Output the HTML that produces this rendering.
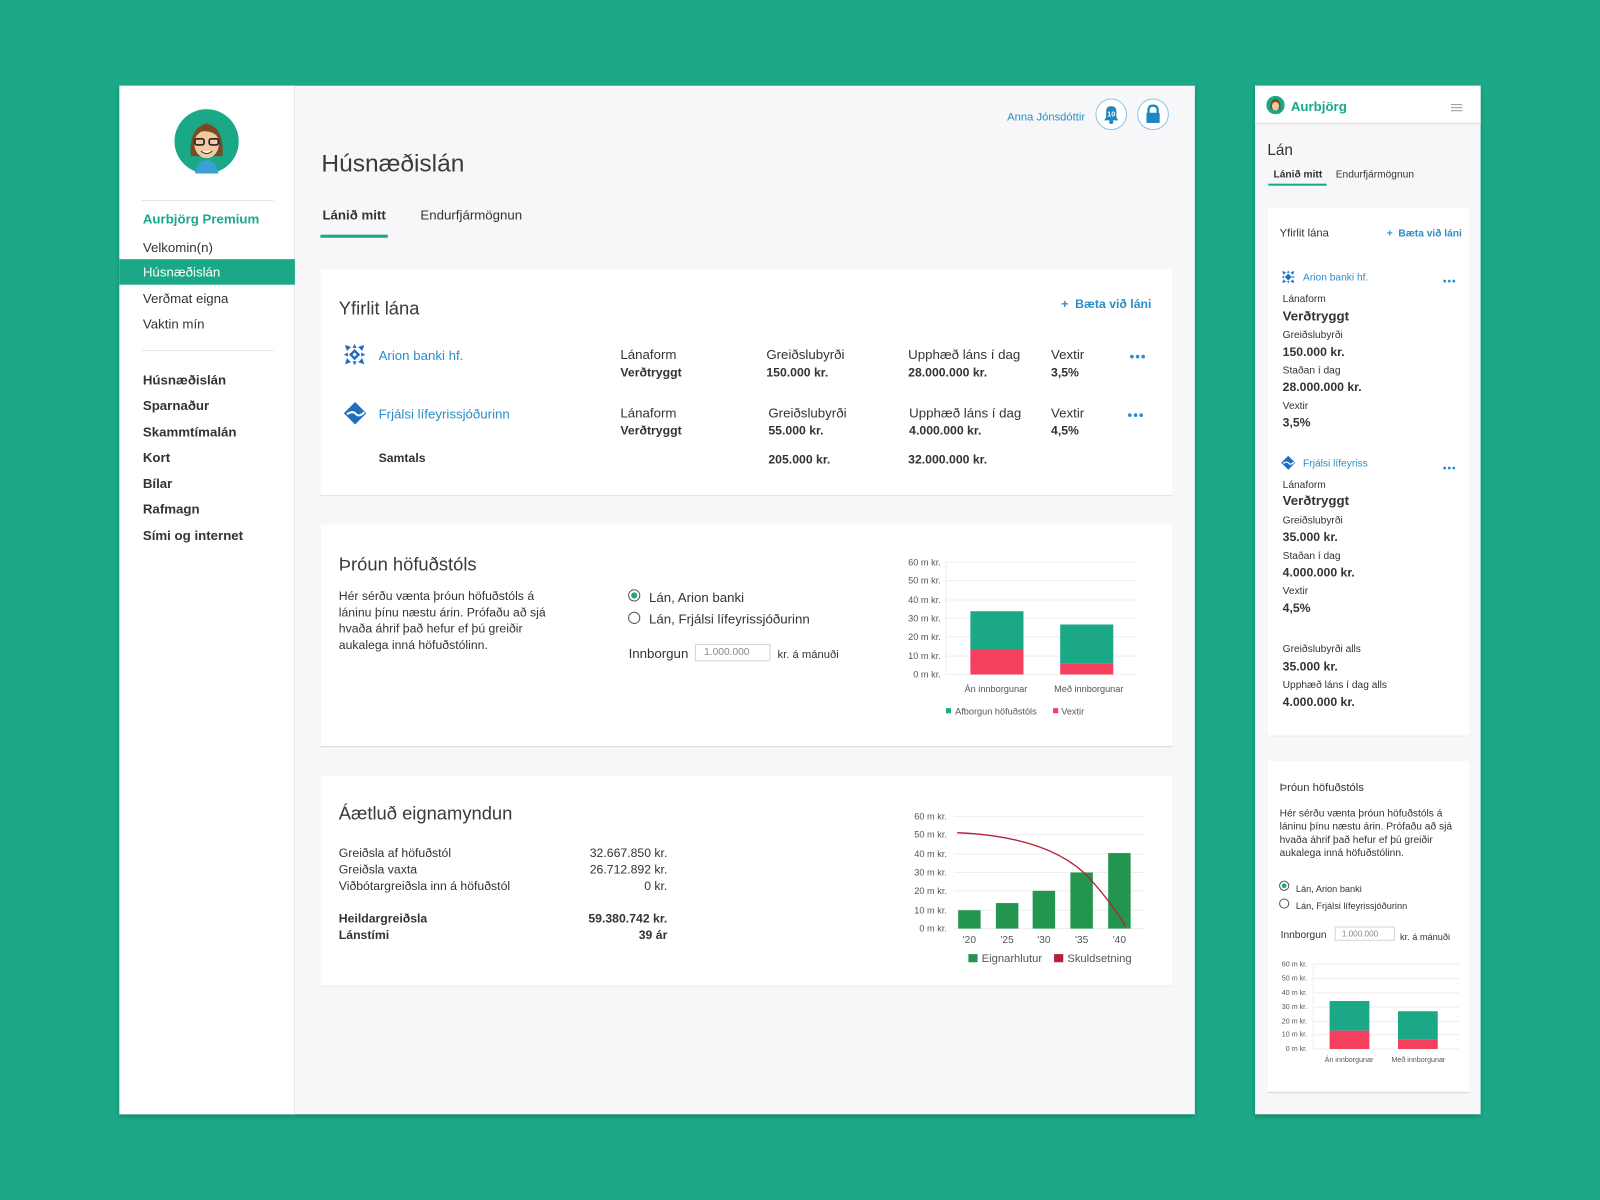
<!DOCTYPE html>
<html><head><meta charset="utf-8">
<style>
*{margin:0;padding:0;box-sizing:border-box}
html,body{width:1600px;height:1200px;overflow:hidden;background:#1aa886}
#w{position:absolute;left:0;top:0;width:1568px;height:1176px;transform:scale(1.020408);transform-origin:0 0;font-family:"Liberation Sans",sans-serif;color:#333}
.a{position:absolute}
.t{position:absolute;white-space:nowrap;line-height:16px;margin-top:2px}
.b{font-weight:bold}
.blue{color:#2a8ec8}
.card{position:absolute;background:#fff;box-shadow:0 1px 1px rgba(0,0,0,.15)}
.s13{font-size:13px}.s12{font-size:12px}.s11{font-size:11px}.s10{font-size:10px}
.r{text-align:right}
.dots{font-size:13px;letter-spacing:1px}
</style></head><body><div id="w">

<div class="a" style="left:117px;top:84px;width:1054px;height:1008px;background:#f7f7f9;box-shadow:0 2px 4px rgba(0,0,0,.25)"></div>
<div class="a" style="left:117px;top:84px;width:172px;height:1008px;background:#fff;border-right:1px solid #e6e6e6"></div>

<svg class="a" style="left:171px;top:107px" width="63" height="63" viewBox="0 0 63 63">
<circle cx="31.5" cy="31.5" r="31.5" fill="#1aa886"/>
<path d="M16 46 Q14 18 31.5 14 Q49 18 47 46 Z" fill="#7a4a22"/>
<path d="M20 63 Q22 50 31.5 50 Q41 50 43 63 Z" fill="#3b9fd6"/>
<ellipse cx="31.5" cy="34" rx="12" ry="14" fill="#f3c9a0"/>
<path d="M19 28 Q22 16 31.5 17 Q41 16 44 28 Q36 20 26 22 Z" fill="#7a4a22"/>
<rect x="20" y="29" width="9" height="6" rx="2" fill="none" stroke="#222" stroke-width="1.6"/>
<rect x="34" y="29" width="9" height="6" rx="2" fill="none" stroke="#222" stroke-width="1.6"/>
<path d="M26 41 Q31.5 46 37 41" fill="#fff" stroke="#333" stroke-width="1"/>
</svg>

<div class="a" style="left:139px;top:196px;width:129px;height:1px;background:#e6e6e6"></div>
<div class="t b s13" style="left:140px;top:205px;color:#1aa886">Aurbjörg Premium</div>
<div class="t s13" style="left:140px;top:233px">Velkomin(n)</div>
<div class="a" style="left:117px;top:254px;width:172px;height:25px;background:#1aa886"></div>
<div class="t s13" style="left:140px;top:257px;color:#fff">Húsnæðislán</div>
<div class="t s13" style="left:140px;top:283px">Verðmat eigna</div>
<div class="t s13" style="left:140px;top:308px">Vaktin mín</div>
<div class="a" style="left:139px;top:343px;width:129px;height:1px;background:#e6e6e6"></div>
<div class="t b s13" style="left:140px;top:363px">Húsnæðislán</div>
<div class="t b s13" style="left:140px;top:388px">Sparnaður</div>
<div class="t b s13" style="left:140px;top:414px">Skammtímalán</div>
<div class="t b s13" style="left:140px;top:439px">Kort</div>
<div class="t b s13" style="left:140px;top:464px">Bílar</div>
<div class="t b s13" style="left:140px;top:489px">Rafmagn</div>
<div class="t b s13" style="left:140px;top:515px">Sími og internet</div>

<div class="t s11 blue" style="left:987px;top:105px">Anna Jónsdóttir</div>
<svg class="a" style="left:1073px;top:96px" width="32" height="32" viewBox="0 0 32 32">
<circle cx="16" cy="16" r="15" fill="#fff" stroke="#8cc4e6" stroke-width="1"/>
<path d="M9 22 L23 22 L21 19 L21 13 Q21 8 16 8 Q11 8 11 13 L11 19 Z" fill="#1f86c4"/>
<circle cx="16" cy="23.5" r="2" fill="#1f86c4"/>
<text x="16" y="18" font-size="7" fill="#fff" text-anchor="middle" font-family="Liberation Sans" font-weight="bold">10</text>
</svg>
<svg class="a" style="left:1114px;top:96px" width="32" height="32" viewBox="0 0 32 32">
<circle cx="16" cy="16" r="15" fill="#fff" stroke="#8cc4e6" stroke-width="1"/>
<path d="M11.5 15 V12 Q11.5 7.5 16 7.5 Q20.5 7.5 20.5 12 V15" fill="none" stroke="#1f86c4" stroke-width="2.2"/>
<rect x="9.5" y="14.5" width="13" height="10" rx="1" fill="#1f86c4"/>
</svg>

<div class="t" style="left:315px;top:145px;font-size:24px;line-height:28px;color:#3a3a3a">Húsnæðislán</div>
<div class="t b s13" style="left:316px;top:201px">Lánið mitt</div>
<div class="t s13" style="left:412px;top:201px">Endurfjármögnun</div>
<div class="a" style="left:314px;top:230px;width:66px;height:3px;background:#1aa886"></div>

<div class="card" style="left:314px;top:264px;width:835px;height:221px"></div>
<div class="t" style="left:332px;top:290px;font-size:18px;line-height:20px;color:#3a3a3a">Yfirlit lána</div>
<div class="t b s12 blue" style="left:1040px;top:288px">+&nbsp; Bæta við láni</div>

<svg class="a" style="left:337px;top:337px" width="21" height="21" viewBox="0 0 21 21">
<g fill="#1f6fc0"><polygon points="10.5,5 16,10.5 10.5,16 5,10.5"/>
<polygon points="1,1 7,3 3,7"/><polygon points="20,1 14,3 18,7"/><polygon points="1,20 7,18 3,14"/><polygon points="20,20 14,18 18,14"/>
<polygon points="10.5,0 12.5,4 8.5,4"/><polygon points="10.5,21 12.5,17 8.5,17"/><polygon points="0,10.5 4,8.5 4,12.5"/><polygon points="21,10.5 17,8.5 17,12.5"/></g>
<rect x="9" y="9" width="3" height="3" fill="#fff" transform="rotate(45 10.5 10.5)"/>
</svg>
<div class="t s13 blue" style="left:371px;top:339px">Arion banki hf.</div>
<svg class="a" style="left:336px;top:393px" width="24" height="24" viewBox="0 0 24 24">
<polygon points="12,1 23,12 12,23 1,12" fill="#1f6fc0"/>
<path d="M4 13 Q10 9 13 13 Q16 16 21 11" fill="none" stroke="#fff" stroke-width="2"/>
</svg>
<div class="t s13 blue" style="left:371px;top:396px">Frjálsi lífeyrissjóðurinn</div>

<div class="t s13" style="left:608px;top:338px">Lánaform</div><div class="t b s12" style="left:608px;top:355px">Verðtryggt</div>
<div class="t s13" style="left:751px;top:338px">Greiðslubyrði</div><div class="t b s12" style="left:751px;top:355px">150.000 kr.</div>
<div class="t s13" style="left:890px;top:338px">Upphæð láns í dag</div><div class="t b s12" style="left:890px;top:355px">28.000.000 kr.</div>
<div class="t s13" style="left:1030px;top:338px">Vextir</div><div class="t b s12" style="left:1030px;top:355px">3,5%</div>
<div class="t b blue dots" style="left:1107px;top:340px">•••</div>

<div class="t s13" style="left:608px;top:395px">Lánaform</div><div class="t b s12" style="left:608px;top:412px">Verðtryggt</div>
<div class="t s13" style="left:753px;top:395px">Greiðslubyrði</div><div class="t b s12" style="left:753px;top:412px">55.000 kr.</div>
<div class="t s13" style="left:891px;top:395px">Upphæð láns í dag</div><div class="t b s12" style="left:891px;top:412px">4.000.000 kr.</div>
<div class="t s13" style="left:1030px;top:395px">Vextir</div><div class="t b s12" style="left:1030px;top:412px">4,5%</div>
<div class="t b blue dots" style="left:1105px;top:397px">•••</div>

<div class="t b s12" style="left:371px;top:439px">Samtals</div>
<div class="t b s12" style="left:753px;top:440px">205.000 kr.</div>
<div class="t b s12" style="left:890px;top:440px">32.000.000 kr.</div>

<div class="card" style="left:314px;top:514px;width:835px;height:217px"></div>
<div class="t" style="left:332px;top:541px;font-size:18px;line-height:20px;color:#3a3a3a">Þróun höfuðstóls</div>
<div class="a s12" style="left:332px;top:576px;width:212px;line-height:16px">Hér sérðu vænta þróun höfuðstóls á láninu þínu næstu árin. Prófaðu að sjá hvaða áhrif það hefur ef þú greiðir aukalega inná höfuðstólinn.</div>
<svg class="a" style="left:615px;top:577px" width="14" height="35"><circle cx="6.5" cy="6.5" r="5.5" fill="none" stroke="#555"/><circle cx="6.5" cy="6.5" r="3" fill="#1aa886"/><circle cx="6.5" cy="28.5" r="5.5" fill="none" stroke="#555"/></svg>
<div class="t s13" style="left:636px;top:576px">Lán, Arion banki</div>
<div class="t s13" style="left:636px;top:597px">Lán, Frjálsi lífeyrissjóðurinn</div>
<div class="t s13" style="left:616px;top:631px">Innborgun</div>
<div class="a" style="left:681px;top:631px;width:74px;height:17px;border:1px solid #d6d6d6;font-size:10px;color:#888;padding:2px 8px">1.000.000</div>
<div class="t s11" style="left:762px;top:632px">kr. á mánuði</div>

<svg class="a" style="left:880px;top:540px" width="250" height="170" font-family="Liberation Sans" font-size="9" fill="#555">
<g stroke="#eee"><line x1="47" y1="11" x2="235" y2="11"/><line x1="47" y1="29" x2="235" y2="29"/><line x1="47" y1="48" x2="235" y2="48"/><line x1="47" y1="66" x2="235" y2="66"/><line x1="47" y1="84" x2="235" y2="84"/><line x1="47" y1="103" x2="235" y2="103"/><line x1="47" y1="121" x2="235" y2="121"/><line x1="47" y1="11" x2="47" y2="121"/></g>
<g text-anchor="end"><text x="42" y="14">60 m kr.</text><text x="42" y="32">50 m kr.</text><text x="42" y="51">40 m kr.</text><text x="42" y="69">30 m kr.</text><text x="42" y="87">20 m kr.</text><text x="42" y="106">10 m kr.</text><text x="42" y="124">0 m kr.</text></g>
<rect x="71" y="59" width="52" height="37" fill="#1aa886"/><rect x="71" y="96" width="52" height="25" fill="#f43f5e"/>
<rect x="159" y="72" width="52" height="38" fill="#1aa886"/><rect x="159" y="110" width="52" height="11" fill="#f43f5e"/>
<g text-anchor="middle"><text x="96" y="138">Án innborgunar</text><text x="187" y="138">Með innborgunar</text></g>
<rect x="47" y="154" width="5" height="5" fill="#1aa886"/><text x="56" y="160">Afborgun höfuðstóls</text>
<rect x="152" y="154" width="5" height="5" fill="#f43f5e"/><text x="160" y="160">Vextir</text>
</svg>

<div class="card" style="left:314px;top:760px;width:835px;height:206px"></div>
<div class="t" style="left:332px;top:785px;font-size:18px;line-height:20px;color:#3a3a3a">Áætluð eignamyndun</div>
<div class="t s12" style="left:332px;top:826px">Greiðsla af höfuðstól</div><div class="t s12 r" style="left:554px;width:100px;top:826px">32.667.850 kr.</div>
<div class="t s12" style="left:332px;top:842px">Greiðsla vaxta</div><div class="t s12 r" style="left:554px;width:100px;top:842px">26.712.892 kr.</div>
<div class="t s12" style="left:332px;top:858px">Viðbótargreiðsla inn á höfuðstól</div><div class="t s12 r" style="left:554px;width:100px;top:858px">0 kr.</div>
<div class="t s12 b" style="left:332px;top:890px">Heildargreiðsla</div><div class="t s12 b r" style="left:534px;width:120px;top:890px">59.380.742 kr.</div>
<div class="t s12 b" style="left:332px;top:906px">Lánstími</div><div class="t s12 b r" style="left:554px;width:100px;top:906px">39 ár</div>

<svg class="a" style="left:880px;top:790px" width="260" height="165" font-family="Liberation Sans" font-size="9" fill="#555">
<g stroke="#eee"><line x1="55" y1="10" x2="242" y2="10"/><line x1="55" y1="28" x2="242" y2="28"/><line x1="55" y1="47" x2="242" y2="47"/><line x1="55" y1="65" x2="242" y2="65"/><line x1="55" y1="83" x2="242" y2="83"/><line x1="55" y1="102" x2="242" y2="102"/><line x1="55" y1="120" x2="242" y2="120"/></g>
<g text-anchor="end"><text x="48" y="13">60 m kr.</text><text x="48" y="31">50 m kr.</text><text x="48" y="50">40 m kr.</text><text x="48" y="68">30 m kr.</text><text x="48" y="86">20 m kr.</text><text x="48" y="105">10 m kr.</text><text x="48" y="123">0 m kr.</text></g>
<g fill="#23954f"><rect x="59" y="102" width="22" height="18"/><rect x="96" y="95" width="22" height="25"/><rect x="132" y="83" width="22" height="37"/><rect x="169" y="65" width="22" height="55"/><rect x="206" y="46" width="22" height="74"/></g>
<path d="M58 26 Q150 30 188 71 Q212 98 223 118" fill="none" stroke="#b5213b" stroke-width="1.3"/>
<g text-anchor="middle" font-size="10"><text x="70" y="134">'20</text><text x="107" y="134">'25</text><text x="143" y="134">'30</text><text x="180" y="134">'35</text><text x="217" y="134">'40</text></g>
<rect x="69" y="145" width="9" height="8" fill="#23954f"/><text x="82" y="153" font-size="11">Eignarhlutur</text>
<rect x="153" y="145" width="9" height="8" fill="#b5213b"/><text x="166" y="153" font-size="11">Skuldsetning</text>
</svg>

<div class="a" style="left:1230px;top:84px;width:221px;height:1008px;background:#f7f7f9;box-shadow:0 2px 4px rgba(0,0,0,.25)"></div>
<div class="a" style="left:1230px;top:84px;width:221px;height:38px;background:#fff;border-bottom:2px solid #e6e6e6"></div>
<svg class="a" style="left:1241px;top:94px" width="18" height="18" viewBox="0 0 18 18"><circle cx="9" cy="9" r="9" fill="#1aa886"/><path d="M4 13 Q4 3 9 3 Q14 3 14 13Z" fill="#7a4a22"/><ellipse cx="9" cy="10" rx="3.5" ry="4.2" fill="#f3c9a0"/></svg>
<div class="t b s13" style="left:1265px;top:95px;color:#1aa886">Aurbjörg</div>
<div class="a" style="left:1422px;top:102px;width:11px;height:1px;background:#999;box-shadow:0 3px 0 #999,0 6px 0 #999"></div>
<div class="t" style="left:1242px;top:137px;font-size:15px;line-height:18px">Lán</div>
<div class="t b s10" style="left:1248px;top:162px">Lánið mitt</div>
<div class="t s10" style="left:1309px;top:162px">Endurfjármögnun</div>
<div class="a" style="left:1243px;top:180px;width:57px;height:2px;background:#1aa886"></div>

<div class="card" style="left:1242px;top:204px;width:198px;height:517px"></div>
<div class="t s11" style="left:1254px;top:219px">Yfirlit lána</div>
<div class="t b s10 blue" style="left:1359px;top:220px">+&nbsp; Bæta við láni</div>
<svg class="a" style="left:1256px;top:265px" width="13" height="13" viewBox="0 0 21 21"><g fill="#1f6fc0"><polygon points="10.5,5 16,10.5 10.5,16 5,10.5"/><polygon points="1,1 7,3 3,7"/><polygon points="20,1 14,3 18,7"/><polygon points="1,20 7,18 3,14"/><polygon points="20,20 14,18 18,14"/><polygon points="10.5,0 12.5,4 8.5,4"/><polygon points="10.5,21 12.5,17 8.5,17"/><polygon points="0,10.5 4,8.5 4,12.5"/><polygon points="21,10.5 17,8.5 17,12.5"/></g></svg>
<div class="t s10 blue" style="left:1277px;top:263px">Arion banki hf.</div>
<div class="t b blue" style="left:1414px;top:267px;font-size:10px;letter-spacing:1px">•••</div>
<div class="t s10" style="left:1257px;top:284px">Lánaform</div><div class="t b s13" style="left:1257px;top:300px">Verðtryggt</div>
<div class="t s10" style="left:1257px;top:319px">Greiðslubyrði</div><div class="t b s12" style="left:1257px;top:335px">150.000 kr.</div>
<div class="t s10" style="left:1257px;top:354px">Staðan í dag</div><div class="t b s12" style="left:1257px;top:369px">28.000.000 kr.</div>
<div class="t s10" style="left:1257px;top:389px">Vextir</div><div class="t b s12" style="left:1257px;top:404px">3,5%</div>

<svg class="a" style="left:1255px;top:446px" width="15" height="15" viewBox="0 0 24 24"><polygon points="12,1 23,12 12,23 1,12" fill="#1f6fc0"/><path d="M4 13 Q10 9 13 13 Q16 16 21 11" fill="none" stroke="#fff" stroke-width="2"/></svg>
<div class="t s10 blue" style="left:1277px;top:445px">Frjálsi lífeyriss</div>
<div class="t b blue" style="left:1414px;top:450px;font-size:10px;letter-spacing:1px">•••</div>
<div class="t s10" style="left:1257px;top:466px">Lánaform</div><div class="t b s13" style="left:1257px;top:481px">Verðtryggt</div>
<div class="t s10" style="left:1257px;top:501px">Greiðslubyrði</div><div class="t b s12" style="left:1257px;top:516px">35.000 kr.</div>
<div class="t s10" style="left:1257px;top:536px">Staðan í dag</div><div class="t b s12" style="left:1257px;top:551px">4.000.000 kr.</div>
<div class="t s10" style="left:1257px;top:570px">Vextir</div><div class="t b s12" style="left:1257px;top:586px">4,5%</div>
<div class="t s10" style="left:1257px;top:627px">Greiðslubyrði alls</div><div class="t b s12" style="left:1257px;top:643px">35.000 kr.</div>
<div class="t s10" style="left:1257px;top:662px">Upphæð láns í dag alls</div><div class="t b s12" style="left:1257px;top:678px">4.000.000 kr.</div>

<div class="card" style="left:1242px;top:746px;width:198px;height:324px"></div>
<div class="t s11" style="left:1254px;top:762px">Þróun höfuðstóls</div>
<div class="a s10" style="left:1254px;top:791px;width:175px;line-height:13px">Hér sérðu vænta þróun höfuðstóls á láninu þínu næstu árin. Prófaðu að sjá hvaða áhrif það hefur ef þú greiðir aukalega inná höfuðstólinn.</div>
<svg class="a" style="left:1253px;top:862px" width="12" height="30"><circle cx="5.5" cy="6" r="4.5" fill="none" stroke="#555"/><circle cx="5.5" cy="6" r="2.3" fill="#1aa886"/><circle cx="5.5" cy="23.5" r="4.5" fill="none" stroke="#555"/></svg>
<div class="t" style="left:1270px;top:861px;font-size:9px">Lán, Arion banki</div>
<div class="t" style="left:1270px;top:878px;font-size:9px">Lán, Frjálsi lífeyrissjóðurinn</div>
<div class="t s10" style="left:1255px;top:907px">Innborgun</div>
<div class="a" style="left:1308px;top:908px;width:59px;height:14px;border:1px solid #d6d6d6;font-size:8px;color:#888;padding:2px 6px;line-height:9px">1.000.000</div>
<div class="t" style="left:1372px;top:908px;font-size:9px">kr. á mánuði</div>
<svg class="a" style="left:1245px;top:935px" width="192" height="115" font-family="Liberation Sans" font-size="7" fill="#555">
<g stroke="#eee"><line x1="42" y1="10" x2="185" y2="10"/><line x1="42" y1="24" x2="185" y2="24"/><line x1="42" y1="38" x2="185" y2="38"/><line x1="42" y1="52" x2="185" y2="52"/><line x1="42" y1="66" x2="185" y2="66"/><line x1="42" y1="79" x2="185" y2="79"/><line x1="42" y1="93" x2="185" y2="93"/><line x1="42" y1="10" x2="42" y2="93"/></g>
<g text-anchor="end"><text x="36" y="12">60 m kr.</text><text x="36" y="26">50 m kr.</text><text x="36" y="40">40 m kr.</text><text x="36" y="54">30 m kr.</text><text x="36" y="68">20 m kr.</text><text x="36" y="81">10 m kr.</text><text x="36" y="95">0 m kr.</text></g>
<rect x="58" y="46" width="39" height="29" fill="#1aa886"/><rect x="58" y="75" width="39" height="18" fill="#f43f5e"/>
<rect x="125" y="56" width="39" height="28" fill="#1aa886"/><rect x="125" y="84" width="39" height="9" fill="#f43f5e"/>
<g text-anchor="middle"><text x="77" y="106">Án innborgunar</text><text x="145" y="106">Með innborgunar</text></g>
</svg>

</div></body></html>
